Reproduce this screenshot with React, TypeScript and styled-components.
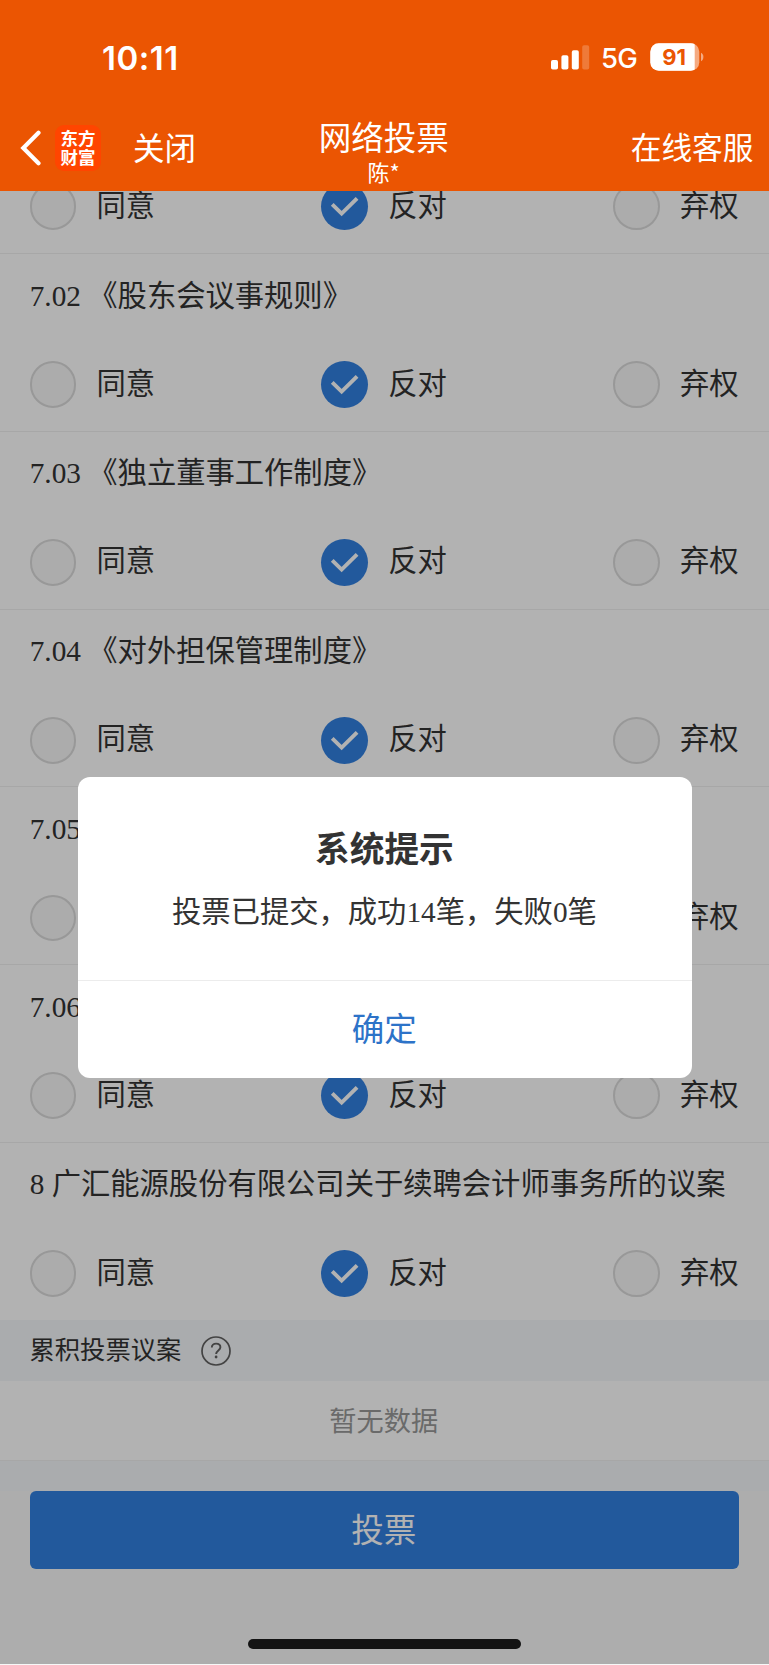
import React from 'react';
import styled, { createGlobalStyle } from 'styled-components';

const serif = `"Liberation Serif", "Noto Sans CJK SC", serif`;
const cjk = `"Noto Sans CJK SC", sans-serif`;

const GlobalStyle = createGlobalStyle`
  html, body { margin: 0; padding: 0; background: #fff; }
  * { box-sizing: border-box; }
`;

const Screen = styled.div`
  position: relative;
  display: flex;
  flex-direction: column;
  width: 769px;
  height: 1665px;
  overflow: hidden;
  background: #f8f8f8;
  color: #333;
  font-family: ${serif};
`;

const Header = styled.header`
  display: flex;
  flex-direction: column;
  flex: none;
  height: 191px;
  background: #eb5502;
  color: #fff;
  font-family: ${cjk};
`;

const StatusBar = styled.div`
  display: flex;
  align-items: center;
  height: 114px;
  padding: 0 65px 0 102px;
  font-family: Inter, sans-serif;
`;

const Clock = styled.span`
  flex: 1;
  font-size: 33px;
  font-weight: 600;
  line-height: 40px;
  letter-spacing: 0.5px;
  padding-top: 1px;
`;

const Network = styled.span`
  width: 36px;
  margin: 1px 13px 0 11.5px;
  font-size: 27.5px;
  font-weight: 500;
  line-height: 32px;
  letter-spacing: -0.8px;
`;

const NavBar = styled.nav`
  display: grid;
  grid-template-columns: 1fr auto 1fr;
  height: 77px;
  padding: 0 15.5px 0 20px;
`;

const NavStart = styled.div`
  display: flex;
  align-items: center;
  height: 67px;
`;

const Logo = styled.div`
  display: grid;
  place-content: center;
  width: 46px;
  height: 46px;
  margin: 0 32px 0 14px;
  border-radius: 9px;
  background: #ff4500;
  font-size: 17.5px;
  font-weight: 700;
  line-height: 19.5px;
  padding-bottom: 1px;
`;

const NavLink = styled.span<{ $size: number }>`
  font-size: ${(p) => p.$size}px;
  line-height: 40px;
  margin-top: -3px;
  white-space: nowrap;
`;

const NavEnd = styled(NavStart)`
  justify-content: flex-end;
`;

const TitleBlock = styled.div`
  display: flex;
  flex-direction: column;
  align-items: center;
  margin: 0 3px 0 -3px;
`;

const PageTitle = styled.h1`
  margin: 2px 0 0;
  font-size: 32.5px;
  font-weight: 400;
  line-height: 40px;
`;

const Account = styled.span`
  font-size: 22px;
  line-height: 32px;
  margin-top: -1px;
`;

const List = styled.main`
  flex: none;
  height: 1129px;
  overflow: hidden;
  background: #fff;
`;

const Row = styled.section<{ $partial?: boolean }>`
  display: flow-root;
  height: ${(p) => (p.$partial ? '63px' : '177.8px')};
  padding: ${(p) => (p.$partial ? '0' : '21.5px')} 30.5px 0 29.7px;
  border-bottom: 1px solid #efefef;
`;

const RowTitle = styled.h2`
  margin: 0 0 45.7px;
  font-size: 29.3px;
  font-weight: 400;
  line-height: 40px;
  white-space: nowrap;
`;

const Options = styled.div<{ $partial?: boolean }>`
  display: flex;
  justify-content: space-between;
  margin-top: ${(p) => (p.$partial ? '-7.6px' : '0')};
`;

const Option = styled.label`
  display: flex;
  align-items: center;
  gap: 20px;
  font-size: 29.3px;
  line-height: 40px;
`;

const OptionText = styled.span`
  margin-top: -2px;
`;

const Radio = styled.span<{ $checked?: boolean }>`
  display: flex;
  align-items: center;
  justify-content: center;
  width: 46.8px;
  height: 46.8px;
  border-radius: 50%;
  border: ${(p) => (p.$checked ? 'none' : '2px solid #dadada')};
  background: ${(p) => (p.$checked ? '#3280e0' : '#f6f6f6')};
`;

const SectionHeader = styled.div`
  display: flex;
  align-items: center;
  gap: 20px;
  flex: none;
  height: 61px;
  padding: 0 29.5px;
  background: #f4f6f9;
  font-size: 25.3px;
  line-height: 32px;
`;

const SectionTitle = styled.span`
  margin-top: -2px;
`;

const Empty = styled.div`
  flex: none;
  height: 80px;
  padding-right: 1.5px;
  border-bottom: 1px solid #efefef;
  background: #fff;
  color: #999;
  font-size: 27.2px;
  line-height: 82px;
  text-align: center;
`;

const Gap = styled.div`
  flex: none;
  height: 30px;
  background: #f4f6f9;
`;

const Footer = styled.footer`
  padding: 0 30px 0 29.5px;
`;

const SubmitButton = styled.button`
  display: block;
  width: 100%;
  height: 77.6px;
  padding: 4px 1px 0 0;
  border: 0;
  border-radius: 6px;
  background: #3280e0;
  color: #fff;
  font-family: ${serif};
  font-size: 32.5px;
  line-height: 73px;
`;

const Overlay = styled.div`
  position: absolute;
  inset: 191px 0 1px;
  background: rgba(0, 0, 0, 0.3);
`;

const Dialog = styled.div`
  position: absolute;
  top: 777px;
  left: 77.7px;
  display: flex;
  flex-direction: column;
  width: 614px;
  height: 301px;
  border-radius: 12px;
  background: #fff;
  text-align: center;
`;

const DialogBody = styled.div`
  height: 204px;
  padding: 51px 0.5px 0 0;
  border-bottom: 1px solid #ececec;
`;

const DialogTitle = styled.h3`
  margin: 0;
  font-size: 34.7px;
  font-weight: 700;
  line-height: 46px;
`;

const DialogText = styled.p`
  margin: 18px 0 0;
  font-size: 29.3px;
  line-height: 40px;
`;

const Confirm = styled.button`
  flex: 1;
  padding: 0 1px 6px 0;
  border: 0;
  background: none;
  color: #2d73c8;
  font-family: ${serif};
  font-size: 32.5px;
`;

const HomeIndicator = styled.div`
  position: absolute;
  left: 247.5px;
  bottom: 16px;
  width: 273.5px;
  height: 9.6px;
  border-radius: 5px;
  background: #131313;
`;

const Signal = () => (
  <svg width="39" height="26" viewBox="0 0 39 26" fill="#fff">
    <rect x="0" y="16" width="7" height="9.500" rx="1.800" />
    <rect x="10.400" y="11.300" width="7" height="14.200" rx="1.800" />
    <rect x="20.800" y="6.300" width="7" height="19.200" rx="1.800" />
    <rect x="31.200" y="1.300" width="7" height="24.200" rx="1.800" opacity="0.22" />
  </svg>
);

const Battery = () => (
  <svg width="54" height="28" viewBox="0 0 54 28">
    <defs>
      <clipPath id="charge">
        <rect width="44.7" height="28" />
      </clipPath>
    </defs>
    <rect x="0.3" y="0.3" width="49" height="27.4" rx="8.5" fill="#fff" opacity="0.5" />
    <rect x="0.3" y="0.3" width="49" height="27.4" rx="8.5" fill="#fff" clipPath="url(#charge)" />
    <path d="M51 9.8c3.2 1.2 3.2 7.2 0 8.4z" fill="#fff" opacity="0.5" />
    <text x="24" y="22" textAnchor="middle" fontFamily="Inter, sans-serif" fontSize="22" fontWeight="700" letterSpacing="-0.2" fill="#eb5502">91</text>
  </svg>
);

const Back = () => (
  <svg width="21" height="36" viewBox="0 0 21 36" fill="none">
    <path d="M18.500 2.700 3.300 18l15.200 15.300" stroke="#fff" strokeWidth="4.200" strokeLinecap="round" />
  </svg>
);

const Check = () => (
  <svg width="46.8" height="46.8" viewBox="0 0 46.7 46.7" fill="none">
    <path d="M11.200 21.300 20.600 30.500 36 15.300" stroke="#fff" strokeWidth="3.900" />
  </svg>
);

const Help = () => (
  <svg width="30" height="30" viewBox="0 0 30 30" fill="none" stroke="#606060" strokeWidth="1.700">
    <circle cx="15" cy="15" r="14" />
    <path d="M10.800 11.600c0-2.600 1.800-4 4.300-4s4.300 1.500 4.300 3.700c0 3-4.300 3.400-4.300 6.800" strokeWidth="1.900" />
    <circle cx="15.100" cy="21" r="1.400" fill="#606060" stroke="none" />
  </svg>
);

const choices = ['同意', '反对', '弃权'];

const Choices = ({ partial }: { partial?: boolean }) => (
  <Options $partial={partial}>
    {choices.map((c) => {
      const checked = c === '反对';
      return (
        <Option key={c}>
          <Radio $checked={checked}>{checked && <Check />}</Radio>
          <OptionText>{c}</OptionText>
        </Option>
      );
    })}
  </Options>
);

const proposals = [
  '7.02 《股东会议事规则》',
  '7.03 《独立董事工作制度》',
  '7.04 《对外担保管理制度》',
  '7.05',
  '7.06',
  '8 广汇能源股份有限公司关于续聘会计师事务所的议案',
];

export default function App() {
  return (
    <Screen>
      <GlobalStyle />
      <Header>
        <StatusBar>
          <Clock>10:11</Clock>
          <Signal />
          <Network>5G</Network>
          <Battery />
        </StatusBar>
        <NavBar>
          <NavStart>
            <Back />
            <Logo>
              <span>东方</span>
              <span>财富</span>
            </Logo>
            <NavLink $size={31.5}>关闭</NavLink>
          </NavStart>
          <TitleBlock>
            <PageTitle>网络投票</PageTitle>
            <Account>陈*</Account>
          </TitleBlock>
          <NavEnd>
            <NavLink $size={30.7}>在线客服</NavLink>
          </NavEnd>
        </NavBar>
      </Header>
      <List>
        <Row $partial>
          <Choices partial />
        </Row>
        {proposals.map((p) => (
          <Row key={p}>
            <RowTitle>{p}</RowTitle>
            <Choices />
          </Row>
        ))}
      </List>
      <SectionHeader>
        <SectionTitle>累积投票议案</SectionTitle>
        <Help />
      </SectionHeader>
      <Empty>暂无数据</Empty>
      <Gap />
      <Footer>
        <SubmitButton>投票</SubmitButton>
      </Footer>
      <Overlay />
      <Dialog role="dialog">
        <DialogBody>
          <DialogTitle>系统提示</DialogTitle>
          <DialogText>投票已提交，成功14笔，失败0笔</DialogText>
        </DialogBody>
        <Confirm>确定</Confirm>
      </Dialog>
      <HomeIndicator />
    </Screen>
  );
}
